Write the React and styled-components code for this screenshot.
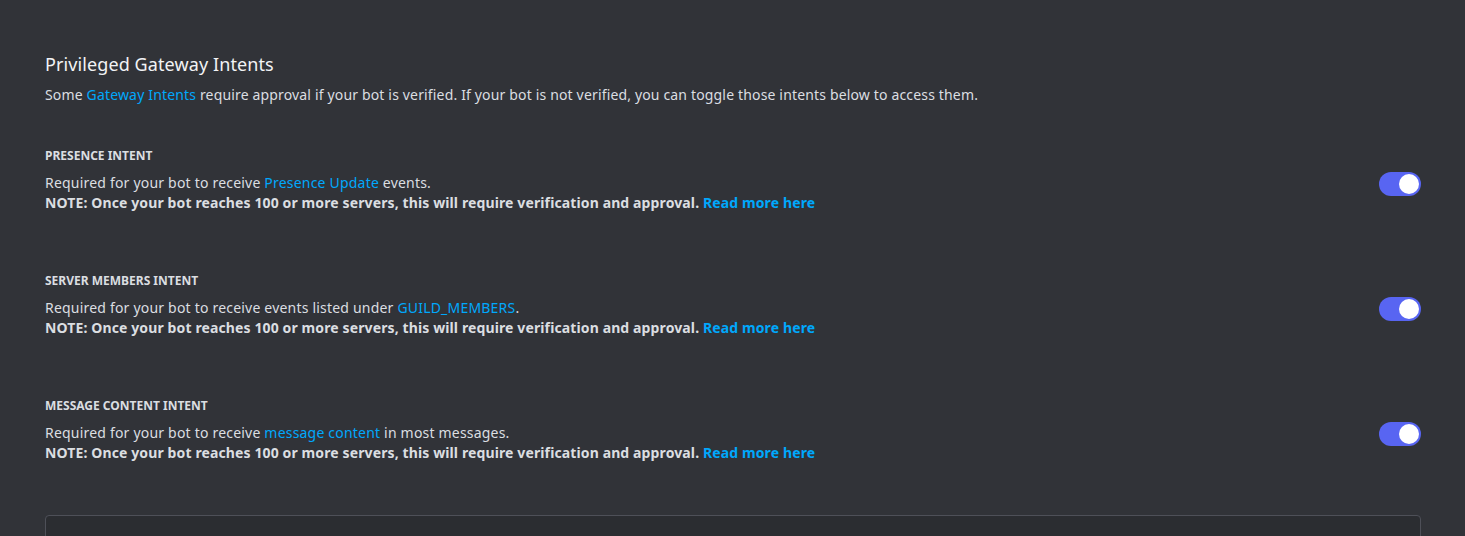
import React from 'react';
import styled, { createGlobalStyle } from 'styled-components';

const GlobalStyle = createGlobalStyle`
  html, body {
    margin: 0;
    padding: 0;
    background-color: #313338;
  }
  body {
    font-family: "Noto Sans", "Open Sans", sans-serif;
    -webkit-font-smoothing: antialiased;
  }
`;

const Page = styled.div`
  height: 536px;
  overflow: hidden;
  padding: 52px 44px 0 45px;
  box-sizing: border-box;
`;

const Title = styled.h2`
  margin: 0;
  font-size: 18px;
  line-height: 24px;
  font-weight: 400;
  letter-spacing: 0.1px;
  color: #f2f3f5;
`;

const Subtitle = styled.p`
  margin: 9px 0 0;
  font-size: 14px;
  line-height: 20px;
  letter-spacing: 0.16px;
  color: #dbdee1;
`;

const Link = styled.a`
  color: #00a8fc;
  text-decoration: none;
  font-weight: ${({ bold }) => (bold ? 700 : 'inherit')};
  cursor: pointer;
`;

const IntentList = styled.div`
  display: flex;
  flex-direction: column;
  gap: 60px;
  margin-top: 43px;
`;

const Intent = styled.section`
  display: flex;
  flex-direction: column;
`;

const Label = styled.h3`
  margin: 0;
  font-size: 12px;
  line-height: 16px;
  font-weight: 700;
  text-transform: uppercase;
  color: #dbdee1;
`;

const Row = styled.div`
  display: flex;
  justify-content: space-between;
  align-items: flex-start;
  margin-top: 9px;
`;

const Description = styled.div`
  font-size: 14px;
  line-height: 20px;
  letter-spacing: 0.2px;
  color: #dbdee1;
`;

const Note = styled.div`
  font-weight: 700;
  letter-spacing: 0.12px;
`;

const Switch = styled.div`
  position: relative;
  width: 42px;
  height: 24px;
  margin-top: -1px;
  border-radius: 12px;
  background-color: ${({ on }) => (on ? '#5865f2' : '#80848e')};
  flex-shrink: 0;
  cursor: pointer;
`;

const Knob = styled.span`
  position: absolute;
  top: 2px;
  left: ${({ on }) => (on ? '20px' : '2px')};
  width: 20px;
  height: 20px;
  border-radius: 50%;
  background-color: #ffffff;
`;

const Panel = styled.div`
  margin-top: 52px;
  height: 60px;
  background-color: #2b2d31;
  border: 1px solid #4e5058;
  border-radius: 4px;
`;

const intents = [
  {
    label: 'Presence Intent',
    before: 'Required for your bot to receive ',
    link: 'Presence Update',
    after: ' events.',
  },
  {
    label: 'Server Members Intent',
    before: 'Required for your bot to receive events listed under ',
    link: 'GUILD_MEMBERS',
    after: '.',
  },
  {
    label: 'Message Content Intent',
    before: 'Required for your bot to receive ',
    link: 'message content',
    after: ' in most messages.',
  },
];

const App = () => (
  <>
    <GlobalStyle />
    <Page>
      <Title>Privileged Gateway Intents</Title>
      <Subtitle>
        Some <Link>Gateway Intents</Link> require approval if your bot is verified. If your bot is not
        verified, you can toggle those intents below to access them.
      </Subtitle>
      <IntentList>
        {intents.map((intent) => (
          <Intent key={intent.label}>
            <Label>{intent.label}</Label>
            <Row>
              <Description>
                <div>
                  {intent.before}
                  <Link>{intent.link}</Link>
                  {intent.after}
                </div>
                <Note>
                  NOTE: Once your bot reaches 100 or more servers, this will require verification and
                  approval. <Link bold>Read more here</Link>
                </Note>
              </Description>
              <Switch on>
                <Knob on />
              </Switch>
            </Row>
          </Intent>
        ))}
      </IntentList>
      <Panel />
    </Page>
  </>
);

export default App;
